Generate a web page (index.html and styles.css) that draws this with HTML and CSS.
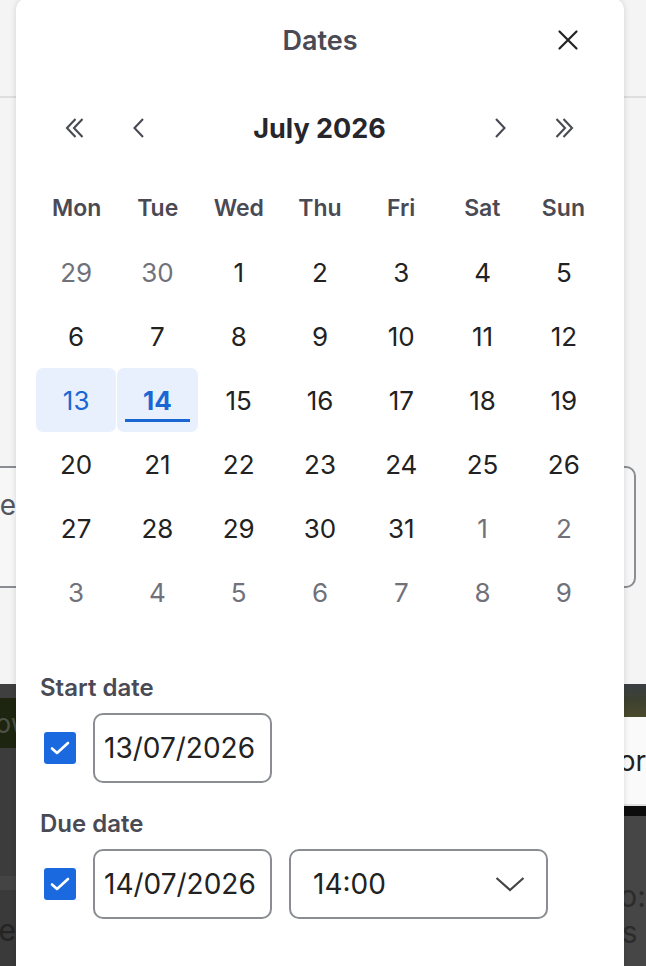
FILE: index.html
```html
<!DOCTYPE html>
<html lang="en">
<head>
<meta charset="utf-8">
<title>Dates</title>
<link rel="stylesheet" href="styles.css">
</head>
<body>
<div class="page">
  <div class="topbar"></div>
  <div class="field">
    <div class="field-label"><span>Title here</span></div>
  </div>
  <div class="lower">
    <div class="lower-left">
      <div class="band"><div class="band-text"><span>Show</span></div></div>
      <div class="left-body"></div>
      <div class="left-foot"><div class="foot-text"><span>Some line</span></div></div>
    </div>
    <div class="lower-right">
      <div class="thumb"></div>
      <div class="card"><span>tor</span></div>
      <div class="blackbar"></div>
      <div class="dark">
        <span class="dk1">to:</span>
        <span class="dk2">as</span>
      </div>
    </div>
  </div>
</div>

<div class="popover">
  <div class="pop-head">
    <span></span>
    <h2 class="pop-title">Dates</h2>
    <button class="close" aria-label="Close">
      <svg width="24" height="24" viewBox="0 0 24 24"><path d="M3.5 3.5 L20.5 20.5 M20.5 3.5 L3.5 20.5" fill="none" stroke="#222" stroke-width="2.2" stroke-linecap="round"/></svg>
    </button>
  </div>

  <div class="nav">
    <button class="nav-btn" aria-label="Previous year">
      <svg width="24" height="24" viewBox="0 0 24 24"><path d="M12.5 3 L4 12 L12.5 21 M19.5 3 L11 12 L19.5 21" fill="none" stroke="#4a4a55" stroke-width="2.1"/></svg>
    </button>
    <button class="nav-btn" aria-label="Previous month">
      <svg width="24" height="24" viewBox="0 0 24 24"><path d="M16 3 L7.5 12 L16 21" fill="none" stroke="#4a4a55" stroke-width="2.1"/></svg>
    </button>
    <div class="month">July 2026</div>
    <button class="nav-btn" aria-label="Next month">
      <svg width="24" height="24" viewBox="0 0 24 24"><path d="M8 3 L16.5 12 L8 21" fill="none" stroke="#4a4a55" stroke-width="2.1"/></svg>
    </button>
    <button class="nav-btn" aria-label="Next year">
      <svg width="24" height="24" viewBox="0 0 24 24"><path d="M4.5 3 L13 12 L4.5 21 M11.5 3 L20 12 L11.5 21" fill="none" stroke="#4a4a55" stroke-width="2.1"/></svg>
    </button>
  </div>

  <div class="weekdays">
    <span>Mon</span><span>Tue</span><span>Wed</span><span>Thu</span><span>Fri</span><span>Sat</span><span>Sun</span>
  </div>

  <div class="days">
    <span class="day other">29</span><span class="day other">30</span><span class="day">1</span><span class="day">2</span><span class="day">3</span><span class="day">4</span><span class="day">5</span>
    <span class="day">6</span><span class="day">7</span><span class="day">8</span><span class="day">9</span><span class="day">10</span><span class="day">11</span><span class="day">12</span>
    <span class="day sel">13</span><span class="day sel today">14</span><span class="day">15</span><span class="day">16</span><span class="day">17</span><span class="day">18</span><span class="day">19</span>
    <span class="day">20</span><span class="day">21</span><span class="day">22</span><span class="day">23</span><span class="day">24</span><span class="day">25</span><span class="day">26</span>
    <span class="day">27</span><span class="day">28</span><span class="day">29</span><span class="day">30</span><span class="day">31</span><span class="day other">1</span><span class="day other">2</span>
    <span class="day other">3</span><span class="day other">4</span><span class="day other">5</span><span class="day other">6</span><span class="day other">7</span><span class="day other">8</span><span class="day other">9</span>
  </div>

  <div class="dates">
    <div class="label label-start">Start date</div>
    <div class="row">
      <span class="check">
        <svg width="32" height="32" viewBox="0 0 32 32"><path d="M8 16.5 L13 21 L24 11" fill="none" stroke="#fff" stroke-width="2.6" stroke-linecap="round" stroke-linejoin="round"/></svg>
      </span>
      <div class="input date">13/07/2026</div>
    </div>
    <div class="label label-due">Due date</div>
    <div class="row">
      <span class="check">
        <svg width="32" height="32" viewBox="0 0 32 32"><path d="M8 16.5 L13 21 L24 11" fill="none" stroke="#fff" stroke-width="2.6" stroke-linecap="round" stroke-linejoin="round"/></svg>
      </span>
      <div class="input date">14/07/2026</div>
      <div class="input select">
        <span>14:00</span>
        <svg width="32" height="18" viewBox="0 0 32 18"><path d="M2.5 3 L16 15 L29.5 3" fill="none" stroke="#444" stroke-width="2.2"/></svg>
      </div>
    </div>
  </div>
</div>
</body>
</html>
```

FILE: styles.css
```css
* { box-sizing: border-box; }

html, body {
  margin: 0;
  padding: 0;
}

body {
  width: 646px;
  height: 966px;
  overflow: hidden;
  position: relative;
  background: #f4f4f4;
  font-family: Inter, "Noto Sans", sans-serif;
  color: #222;
}

/* ---------- background page ---------- */
.page {
  height: 966px;
  display: flex;
  flex-direction: column;
}

.topbar {
  height: 98px;
  border-bottom: 2px solid #dedede;
  background: #f4f4f4;
  flex: none;
}

.field {
  flex: none;
  margin: 368px 10px 0 -30px;
  height: 122px;
  border: 2px solid #8a8d91;
  border-radius: 10px;
  background: #f7f7f7;
  padding-top: 20px;
}

.field-label {
  width: 44px;
  display: flex;
  justify-content: flex-end;
  font-size: 28px;
  color: #55555e;
  white-space: nowrap;
}

.lower {
  flex: none;
  margin-top: 96px;
  display: flex;
  height: 282px;
}

.lower-left {
  width: 300px;
  background: #3f3f3f;
  padding-top: 14px;
  display: flex;
  flex-direction: column;
}

.band {
  height: 50px;
  background: #1d240f;
  display: flex;
  align-items: center;
}

.band-text {
  width: 32px;
  display: flex;
  justify-content: flex-end;
  font-size: 26px;
  color: #4d5245;
  white-space: nowrap;
}

.left-body {
  height: 128px;
  background: #3c3c3c;
}

.left-foot {
  flex: 1;
  border-top: 14px solid #444;
  background: #3a3a3a;
  padding-top: 22px;
}

.foot-text {
  width: 16px;
  display: flex;
  justify-content: flex-end;
  font-size: 30px;
  color: #242424;
  white-space: nowrap;
}

.lower-right {
  flex: 1;
  display: flex;
  flex-direction: column;
}

.thumb {
  height: 33px;
  background: linear-gradient(180deg, #3b3f46 0%, #3c4030 45%, #4a4a2c 100%);
}

.card {
  height: 89px;
  background: #fafafa;
  border-bottom: 2px solid #e0e0e0;
  display: flex;
  align-items: center;
  padding-left: 315px;
  font-size: 28px;
  color: #222;
  white-space: nowrap;
}

.blackbar {
  height: 10px;
  background: #0c0c0c;
}

.dark {
  flex: 1;
  background: #464646;
  padding: 62px 0 0 0;
  font-size: 30px;
  color: #2c2c2c;
  display: flex;
  flex-direction: column;
  line-height: 36px;
  white-space: nowrap;
}
.dk1 { margin-left: 315px; }
.dk2 { margin-left: 310px; }

/* ---------- popover ---------- */
.popover {
  position: absolute;
  left: 16px;
  top: -2px;
  width: 608px;
  height: 990px;
  background: #fff;
  border-radius: 12px;
  box-shadow: 0 0 6px rgba(0, 0, 0, 0.14);
}

.pop-head {
  height: 84px;
  display: grid;
  grid-template-columns: 1fr auto 1fr;
  align-items: center;
  padding: 0 36px;
}

.pop-title {
  margin: 0;
  font-size: 27px;
  font-weight: 600;
  color: #4a4a55;
}

.close {
  justify-self: end;
  width: 40px;
  height: 40px;
  border: 0;
  background: none;
  padding: 0;
  display: flex;
  align-items: center;
  justify-content: center;
}

.nav {
  margin-top: 14px;
  height: 64px;
  display: flex;
  align-items: center;
  gap: 16px;
  padding: 0 36px 0 35px;
}

.nav-btn {
  width: 48px;
  height: 48px;
  border: 0;
  background: none;
  padding: 0;
  display: flex;
  align-items: center;
  justify-content: center;
}

.month {
  flex: 1;
  text-align: center;
  font-size: 27px;
  font-weight: 700;
  color: #26262c;
}

.weekdays {
  margin: 24px 20px 0;
  height: 48px;
  display: grid;
  grid-template-columns: repeat(7, 1fr);
  align-items: center;
  text-align: center;
  font-size: 23px;
  font-weight: 600;
  color: #4a4a55;
}

.days {
  margin: 8px 20px 0;
  display: grid;
  grid-template-columns: repeat(7, 1fr);
  grid-auto-rows: 64px;
  column-gap: 1px;
}

.day {
  display: flex;
  align-items: center;
  justify-content: center;
  font-size: 26px;
  color: #222;
  border-radius: 7px;
  position: relative;
}

.day.other { color: #71717a; }

.day.sel {
  background: #e8f0fe;
  color: #1a67d4;
}

.day.today { font-weight: 700; }

.day.today::after {
  content: "";
  position: absolute;
  left: 8px;
  right: 8px;
  bottom: 10px;
  height: 3px;
  background: #1a67d4;
}

.dates {
  padding: 0 24px;
  margin-top: 52px;
}

.label {
  font-size: 24px;
  font-weight: 600;
  color: #4a4a55;
  line-height: 24px;
}

.label-due { margin-top: 29px; }

.row {
  margin-top: 13px;
  display: flex;
  align-items: center;
  gap: 17px;
}

.check {
  margin-left: 4px;
  width: 32px;
  height: 32px;
  border-radius: 3px;
  background: #1b69df;
  display: flex;
}

.input {
  height: 70px;
  border: 2px solid #8a8d91;
  border-radius: 10px;
  display: flex;
  align-items: center;
  font-size: 28px;
  color: #222;
}

.date {
  width: 179px;
  padding-left: 9px;
}

.select {
  width: 259px;
  padding: 0 20px 0 22px;
  justify-content: space-between;
}
```
